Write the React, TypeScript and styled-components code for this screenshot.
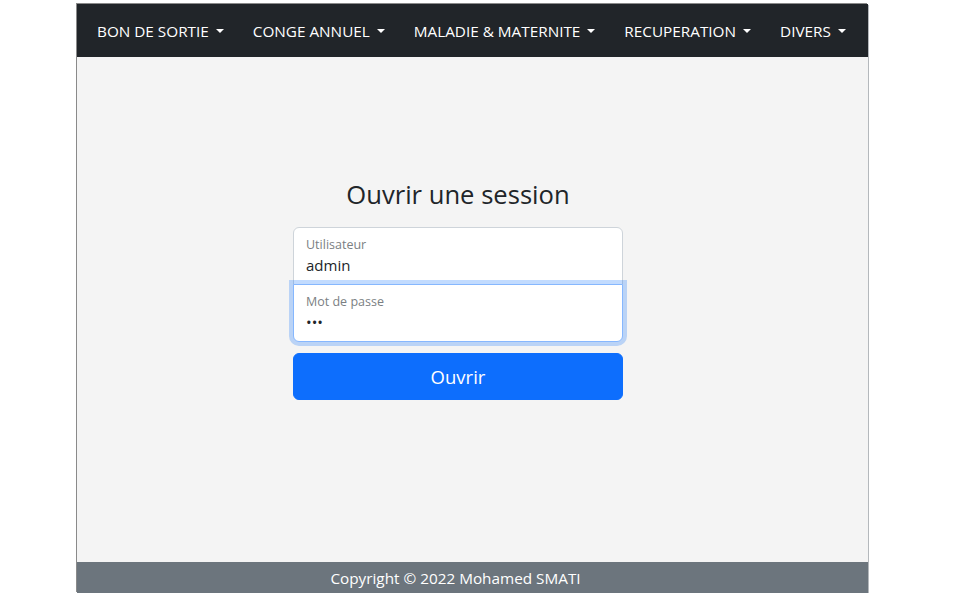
import React from 'react';
import styled, { createGlobalStyle } from 'styled-components';

const GlobalStyle = createGlobalStyle`
  html, body {
    margin: 0;
    padding: 0;
    background: #fff;
  }

  body {
    font-family: "Open Sans", "Noto Sans", sans-serif;
    color: #212529;
  }
`;

const Page = styled.div`
  width: 945px;
  padding-top: 4px;
`;

const Frame = styled.div`
  width: 791px;
  height: 589px;
  margin: 0 auto;
  display: flex;
  flex-direction: column;
  box-shadow: -1px -1px 0 #8a8a8a, 1px 1px 0 #b4b8bc;
`;

const NavBar = styled.nav`
  height: 53px;
  flex-shrink: 0;
  display: flex;
  align-items: center;
  gap: 29px;
  padding-left: 20px;
  background: #212529;
`;

const NavItem = styled.a`
  color: #fff;
  font-size: 15.3px;
  line-height: 22px;
  text-decoration: none;
  white-space: nowrap;
  cursor: pointer;

  &::after {
    content: '';
    display: inline-block;
    margin-left: 7px;
    vertical-align: 4px;
    border-top: 4.5px solid #fff;
    border-left: 4.5px solid transparent;
    border-right: 4.5px solid transparent;
  }
`;

const Main = styled.main`
  flex: 1;
  display: flex;
  flex-direction: column;
  align-items: center;
  padding: 121px 29px 0 0;
  background: #f4f4f4;
`;

const Title = styled.h3`
  margin: 0 0 15px;
  font-size: 25.6px;
  font-weight: 400;
  line-height: 34px;
  color: #212529;
`;

const Form = styled.form`
  width: 330px;
  display: flex;
  flex-direction: column;
`;

const Field = styled.label<{ $position: 'top' | 'bottom'; $focused?: boolean }>`
  box-sizing: border-box;
  height: 58px;
  display: flex;
  flex-direction: column;
  padding: 8px 12px 0;
  background: #fff;
  border: 1px solid ${({ $focused }) => ($focused ? '#86b7fe' : '#ced4da')};
  border-radius: ${({ $position }) => ($position === 'top' ? '6px 6px 0 0' : '0 0 6px 6px')};
  margin-bottom: ${({ $position }) => ($position === 'top' ? '-1px' : '0')};
  box-shadow: ${({ $focused }) => ($focused ? '0 0 0 4px rgba(13, 110, 253, 0.25)' : 'none')};
  position: relative;
  z-index: ${({ $focused }) => ($focused ? 1 : 0)};
`;

const Caption = styled.span`
  font-size: 12.5px;
  line-height: 18px;
  color: #7b7f83;
`;

const Input = styled.input`
  border: 0;
  outline: none;
  padding: 0;
  background: transparent;
  font-family: inherit;
  font-size: 15px;
  line-height: 23px;
  height: 23px;
  color: #212529;
`;

const Submit = styled.button`
  margin-top: 11px;
  height: 47px;
  border: 1px solid #0d6efd;
  border-radius: 6px;
  background: #0d6efd;
  color: #fff;
  font-family: inherit;
  font-size: 18.5px;
  line-height: 26px;
  cursor: pointer;
`;

const Footer = styled.footer`
  height: 31px;
  flex-shrink: 0;
  display: flex;
  align-items: center;
  justify-content: center;
  padding-right: 34px;
  background: #6c757d;
  color: #fff;
  font-size: 15.3px;
`;

const menus = ['BON DE SORTIE', 'CONGE ANNUEL', 'MALADIE & MATERNITE', 'RECUPERATION', 'DIVERS'];

const App = () => (
  <Page>
    <GlobalStyle />
    <Frame>
      <NavBar>
        {menus.map((label) => (
          <NavItem key={label}>{label}</NavItem>
        ))}
      </NavBar>
      <Main>
        <Title>Ouvrir une session</Title>
        <Form onSubmit={(e) => e.preventDefault()}>
          <Field $position="top">
            <Caption>Utilisateur</Caption>
            <Input type="text" defaultValue="admin" />
          </Field>
          <Field $position="bottom" $focused>
            <Caption>Mot de passe</Caption>
            <Input type="password" defaultValue="abc" />
          </Field>
          <Submit type="submit">Ouvrir</Submit>
        </Form>
      </Main>
      <Footer>Copyright © 2022 Mohamed SMATI</Footer>
    </Frame>
  </Page>
);

export default App;
